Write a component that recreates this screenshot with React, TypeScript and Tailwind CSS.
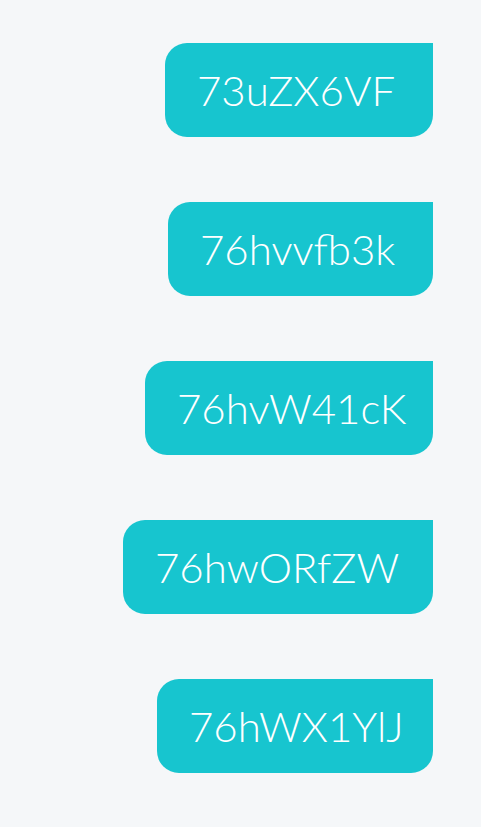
const codes = [
  { text: "73uZX6VF", width: "w-[268px]" },
  { text: "76hvvfb3k", width: "w-[265px]" },
  { text: "76hvW41cK", width: "w-[288px]" },
  { text: "76hwORfZW", width: "w-[310px]" },
  { text: "76hWX1YlJ", width: "w-[276px]" },
];

export default function App() {
  return (
    <div className="min-h-[827px] bg-[#f5f7f9] pt-[43px] pr-[48px] font-['Lato',sans-serif]">
      <div className="flex flex-col items-end gap-[65px]">
        {codes.map((c) => (
          <div
            key={c.text}
            className={`${c.width} flex h-[94px] items-center rounded-[22px] rounded-tr-none bg-[#17c5cf] pl-8 text-[42px] font-light leading-none text-white`}
          >
            {c.text}
          </div>
        ))}
      </div>
    </div>
  );
}
